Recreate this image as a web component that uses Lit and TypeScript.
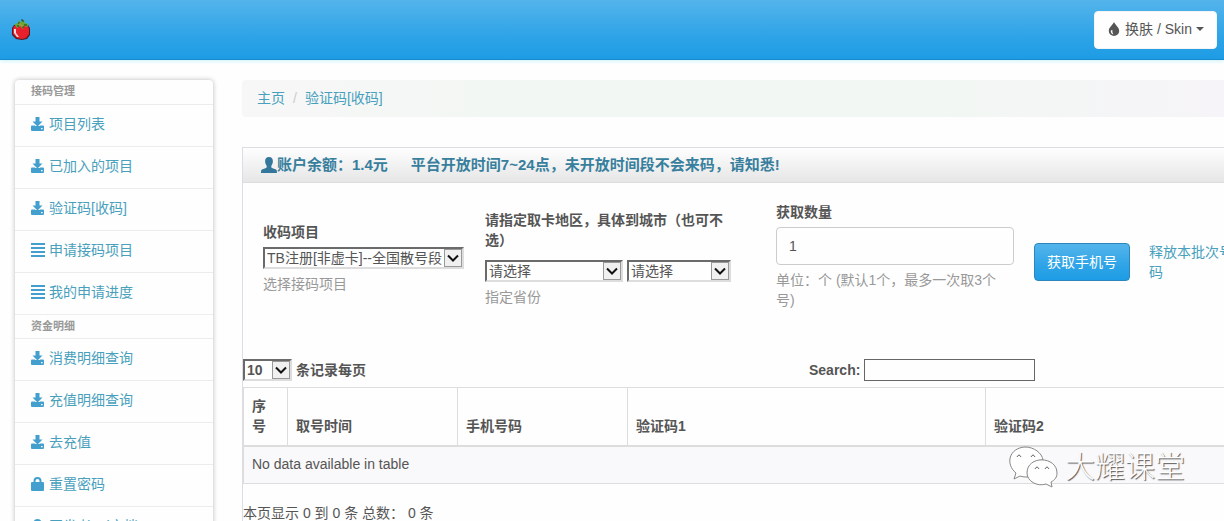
import { LitElement, html, css, svg } from "lit";
import { customElement, property } from "lit/decorators.js";

const glyphs: Record<string, unknown> = {
  download: svg`<path d="M4.500 0h4v4.500h3L6.500 9.500 1.500 4.500h3z"/><path d="M1 8.500h2.800L6.500 11l2.700-2.500H12q1 0 1 1V13q0 1-1 1H1q-1 0-1-1V9.500q0-1 1-1zm9 2.500v1.300h1.600V11z" fill-rule="evenodd"/><path d="M4 9h5v3H4z"/>`,
  list: svg`<path d="M0 0h14v2H0zM0 4h14v2H0zM0 8h14v2H0zM0 12h14v2H0z"/>`,
  lock: svg`<path d="M2.500 5V4a4 4 0 0 1 8 0v1H12q1 0 1 1v7q0 1-1 1H1q-1 0-1-1V6q0-1 1-1zM4.500 5h4V4a2 2 0 0 0-4 0z" fill-rule="evenodd"/>`,
  user: svg`<path d="M7 0c2.300 0 3.600 1.600 3.400 4-.1 1.800-.8 3-1.400 3.800v1.100c.4.9 2.800 1.100 4.200 2.100.6.5.8 1.400.8 3H0c0-1.600.2-2.500.8-3 1.400-1 3.800-1.200 4.200-2.100V7.800C4.400 7 3.700 5.800 3.600 4 3.400 1.600 4.700 0 7 0z"/>`,
  drop: svg`<path d="M7 0c1 3 5.200 5 5.200 9A5.200 5 0 0 1 1.800 9C1.800 5 6 3 7 0zM3.900 8.200c-.5 2 .6 3.800 2.600 4.200-1-1-1.300-2.400-1-4.100z" fill-rule="evenodd"/>`,
};

@customElement("ui-glyph")
class UiGlyph extends LitElement {
  @property() name = "list";
  static styles = css`
    :host { display: inline-block; width: 14px; height: 14px; flex: none; }
    svg { display: block; width: 100%; height: 100%; fill: currentColor; }
  `;
  render() {
    return html`<svg viewBox="0 0 14 14" aria-hidden="true">${glyphs[this.name]}</svg>`;
  }
}

const menu = [
  {
    title: "接码管理",
    items: [
      ["download", "项目列表"],
      ["download", "已加入的项目"],
      ["download", "验证码[收码]"],
      ["list", "申请接码项目"],
      ["list", "我的申请进度"],
    ],
  },
  {
    title: "资金明细",
    items: [
      ["download", "消费明细查询"],
      ["download", "充值明细查询"],
      ["download", "去充值"],
      ["lock", "重置密码"],
      ["lock", "开发者api文档"],
    ],
  },
];

@customElement("app-root")
class AppRoot extends LitElement {
  static styles = css`
    :host {
      display: block;
      height: 100vh;
      overflow: hidden;
      position: relative;
      background: #fefefe;
      color: #555;
      font: 14px/20px "Liberation Sans", "Noto Sans CJK SC", sans-serif;
    }
    * { box-sizing: border-box; }
    a { color: #48a0bd; text-decoration: none; }
    .topbar {
      display: flex;
      align-items: center;
      justify-content: space-between;
      height: 60px;
      padding: 0 7px 0 11px;
      background: linear-gradient(#54b4eb, #2fa4e7 60%, #1d9ce5);
      border-bottom: 1px solid #178acc;
      box-shadow: 0 1px 4px #c8f2f8;
    }
    .logo svg { display: block; width: 20px; height: 22px; }
    .skin {
      display: flex;
      align-items: center;
      gap: 4px;
      height: 38px;
      padding: 0 12px 2px;
      border: 1px solid #f4f4f4;
      border-radius: 4px;
      background: #fefefe;
      color: #555;
      font: inherit;
    }
    .caret { border: 4px solid transparent; border-top-color: #555; border-bottom: 0; }
    .layout {
      display: grid;
      grid-template-columns: 198px minmax(0, 1fr);
      gap: 29px;
      padding: 20px 0 0 15px;
    }
    .side {
      border-radius: 4px;
      background: #fefefe;
      box-shadow: 0 0 5px #bbb;
      align-self: start;
    }
    .side h2 {
      margin: 0;
      height: 24px;
      padding-left: 16px;
      font-size: 11px;
      line-height: 22px;
      color: #999;
    }
    .side ul { margin: 0; padding: 0; list-style: none; }
    .side ul + h2 { border-top: 1px solid #eee; }
    .side li { border-top: 1px solid #eaecee; }
    .side li a {
      display: flex;
      align-items: center;
      gap: 4px;
      height: 41px;
      padding: 0 0 4px 16px;
    }
    .side ui-glyph { color: #429fce; }
    .crumbs {
      display: flex;
      gap: 8px;
      height: 37px;
      padding: 8px 15px;
      border-radius: 4px 0 0 4px;
      background: linear-gradient(90deg, #f7f7f7, #f2f7f3 30%, #f2f7f3 70%, #f6f4f8);
    }
    .crumbs span { color: #ccc; }
    .panel { margin-top: 30px; border: 1px solid #dcdce2; border-width: 1px 0 0 1px; }
    .panel h1 {
      display: flex;
      align-items: center;
      height: 35px;
      margin: 0;
      padding-left: 18px;
      border-bottom: 1px solid #ddd;
      background: linear-gradient(#fefefe, #e6e6e6);
      color: #387f9d;
      font-size: 15px;
      line-height: 20px;
    }
    .panel h1 ui-glyph { width: 16px; height: 16px; color: #33779c; }
    .panel h1 span { margin-left: 23px; }
    .form {
      display: grid;
      grid-template-columns: 222px 291px 258px 115px minmax(0, 1fr);
      align-items: center;
      height: 160px;
      padding: 0 0 10px 20px;
    }
    .form > .area { padding-right: 44px; }
    .form > .area label { margin-bottom: 10px; }
    .form > .count { padding-right: 20px; padding-bottom: 4px; }
    .form label { display: block; font-weight: bold; margin-bottom: 5px; }
    .help { margin: 5px 0 0; color: #999; }
    .pair { display: flex; gap: 4px; }
    .drop { position: relative; display: inline-block; vertical-align: middle; }
    .drop select {
      appearance: none;
      display: block;
      width: 100%;
      height: 22px;
      margin: 0;
      padding: 0 20px 0 2px;
      border: 2px solid;
      border-color: #6a6a6a #ddd #ddd #6a6a6a;
      border-radius: 0;
      background: #fefefe;
      color: #555;
      font: inherit;
      line-height: 18px;
    }
    .drop svg {
      position: absolute;
      top: 2px;
      right: 2px;
      width: 18px;
      height: 18px;
      pointer-events: none;
      background: #f0f0f0;
      border: 1px solid #999;
    }
    .project { width: 201px; }
    .province { width: 138px; }
    .city { width: 104px; }
    .number {
      display: block;
      width: 100%;
      height: 38px;
      padding: 8px 12px;
      border: 1px solid #ccc;
      border-radius: 4px;
      background: #fefefe;
      color: #555;
      font: inherit;
    }
    .get {
      justify-self: start;
      height: 38px;
      margin-top: 8px;
      padding: 0 12px;
      border: 1px solid #2c86bb;
      border-radius: 4px;
      background: linear-gradient(#54b4eb, #2fa4e7 60%, #1d9ce5);
      color: #fff;
      font: inherit;
    }
    .release { margin-top: 8px; white-space: nowrap; }
    .tools {
      display: grid;
      grid-template-columns: 566px 1fr;
      align-items: center;
      margin-top: 16px;
      height: 22px;
      font-weight: bold;
    }
    .tools label { display: flex; align-items: center; gap: 4px; }
    .size { width: 49px; }
    .search {
      width: 171px;
      height: 22px;
      border: 1px solid #666;
      background: #fefefe;
      font: inherit;
    }
    table {
      width: 100%;
      margin-top: 6px;
      border-collapse: collapse;
      table-layout: fixed;
      text-align: left;
    }
    th, td { padding: 8px; border: 1px solid #ddd; }
    th { height: 58px; padding: 7px 8px 9px; vertical-align: bottom; border-bottom-width: 2px; }
    td { height: 38px; padding: 7px 8px 9px; background: #f9f8fa; }
    tr > :last-child { border-right: 0; }
    .c1 { width: 44px; }
    .c2, .c3 { width: 170px; }
    .c4 { width: 358px; }
    .info { margin: 19px 0 0; white-space: pre; }
    .mark {
      position: absolute;
      right: 39px;
      bottom: 32px;
      display: flex;
      align-items: center;
      gap: 7px;
      color: #fefefe;
      font-size: 30px;
      font-weight: 300;
      line-height: 44px;
      text-shadow: 1px 1px 1px #555;
    }
    .mark svg { width: 50px; height: 44px; }
  `;

  drop(id: string, cls: string, text: string) {
    return html`<span class="drop ${cls}"
      ><select id=${id} aria-label=${text}><option>${text}</option></select
      ><svg viewBox="0 0 16 16" aria-hidden="true"><path d="M3 5.500l5 5 5-5" fill="none" stroke="#111" stroke-width="2"/></svg
    ></span>`;
  }

  render() {
    return html`
      <header class="topbar">
        <a class="logo" href="#" aria-label="首页">
          <svg viewBox="0 0 20 22" aria-hidden="true">
            <path d="M3 6h14l2 3v7l-3 4-5 1-6-1-4-4V9z" fill="#5a1720"/>
            <path d="M3 7h14l1 3v5l-3 4-4 1-5-1-4-4v-5z" fill="#e8202c"/>
            <path d="M3 10h2v4l3 4H6l-3-4z" fill="#ffd9d9"/>
            <path d="M3 5l4-1 1-3 2 2 3-2 1 3 4 1-2 3-3-1-1 3-3-3-3 2z" fill="#63a83a"/>
            <path d="M7 4h2M10 1h2v2M13 6h3M6 7h2M11 8h2" stroke="#26401c" fill="none"/>
            <path d="M8 5h2v2h2" stroke="#d98a35" fill="none"/>
          </svg>
        </a>
        <button class="skin" type="button">
          <ui-glyph name="drop"></ui-glyph>换肤 / Skin<span class="caret"></span>
        </button>
      </header>
      <div class="layout">
        <nav class="side">
          ${menu.map(
            (group) => html`<h2>${group.title}</h2>
              <ul>
                ${group.items.map(
                  ([icon, text]) => html`<li><a href="#"><ui-glyph name=${icon}></ui-glyph>${text}</a></li>`
                )}
              </ul>`
          )}
        </nav>
        <main>
          <div class="crumbs"><a href="#">主页</a><span>/</span><a href="#">验证码[收码]</a></div>
          <section class="panel">
            <h1><ui-glyph name="user"></ui-glyph>账户余额：1.4元<span>平台开放时间7~24点，未开放时间段不会来码，请知悉!</span></h1>
            <form class="form">
              <div>
                <label for="project">收码项目</label>
                ${this.drop("project", "project", "TB注册[非虚卡]--全国散号段")}
                <p class="help">选择接码项目</p>
              </div>
              <div class="area">
                <label for="province">请指定取卡地区，具体到城市（也可不选）</label>
                <div class="pair">
                  ${this.drop("province", "province", "请选择")}${this.drop("city", "city", "请选择")}
                </div>
                <p class="help">指定省份</p>
              </div>
              <div class="count">
                <label for="count">获取数量</label>
                <input class="number" id="count" type="text" value="1" />
                <p class="help">单位：个 (默认1个，最多一次取3个号)</p>
              </div>
              <button class="get" type="button">获取手机号</button>
              <a class="release" href="#">释放本批次号<br />码</a>
            </form>
            <div class="tools">
              <label for="size">${this.drop("size", "size", "10")}条记录每页</label>
              <label for="search">Search:<input class="search" id="search" type="text" /></label>
            </div>
            <table>
              <thead>
                <tr>
                  <th class="c1">序号</th>
                  <th class="c2">取号时间</th>
                  <th class="c3">手机号码</th>
                  <th class="c4">验证码1</th>
                  <th>验证码2</th>
                </tr>
              </thead>
              <tbody>
                <tr><td colspan="5">No data available in table</td></tr>
              </tbody>
            </table>
            <p class="info">本页显示 0 到 0 条 总数： 0 条</p>
          </section>
        </main>
      </div>
      <div class="mark">
        <svg viewBox="0 0 50 44" fill="#fefefe" stroke="#888" aria-hidden="true">
          <path d="M6 34l2-6C-3 19 1 3 17 2c9 0 17 6 18 13-10 0-17 8-15 17-3 0-5 0-8-1z"/>
          <path d="M44 42l-6-3c-9 3-19-3-19-11 0-18 30-17 30 0 0 4-2 7-6 9z"/>
          <g fill="none" stroke="#666"><path d="M9 12q2-4 4 0M23 12q2-4 4 0M27 24q2-4 4 0M37 24q2-4 4 0"/></g>
        </svg>
        <span>大耀课堂</span>
      </div>
    `;
  }
}
